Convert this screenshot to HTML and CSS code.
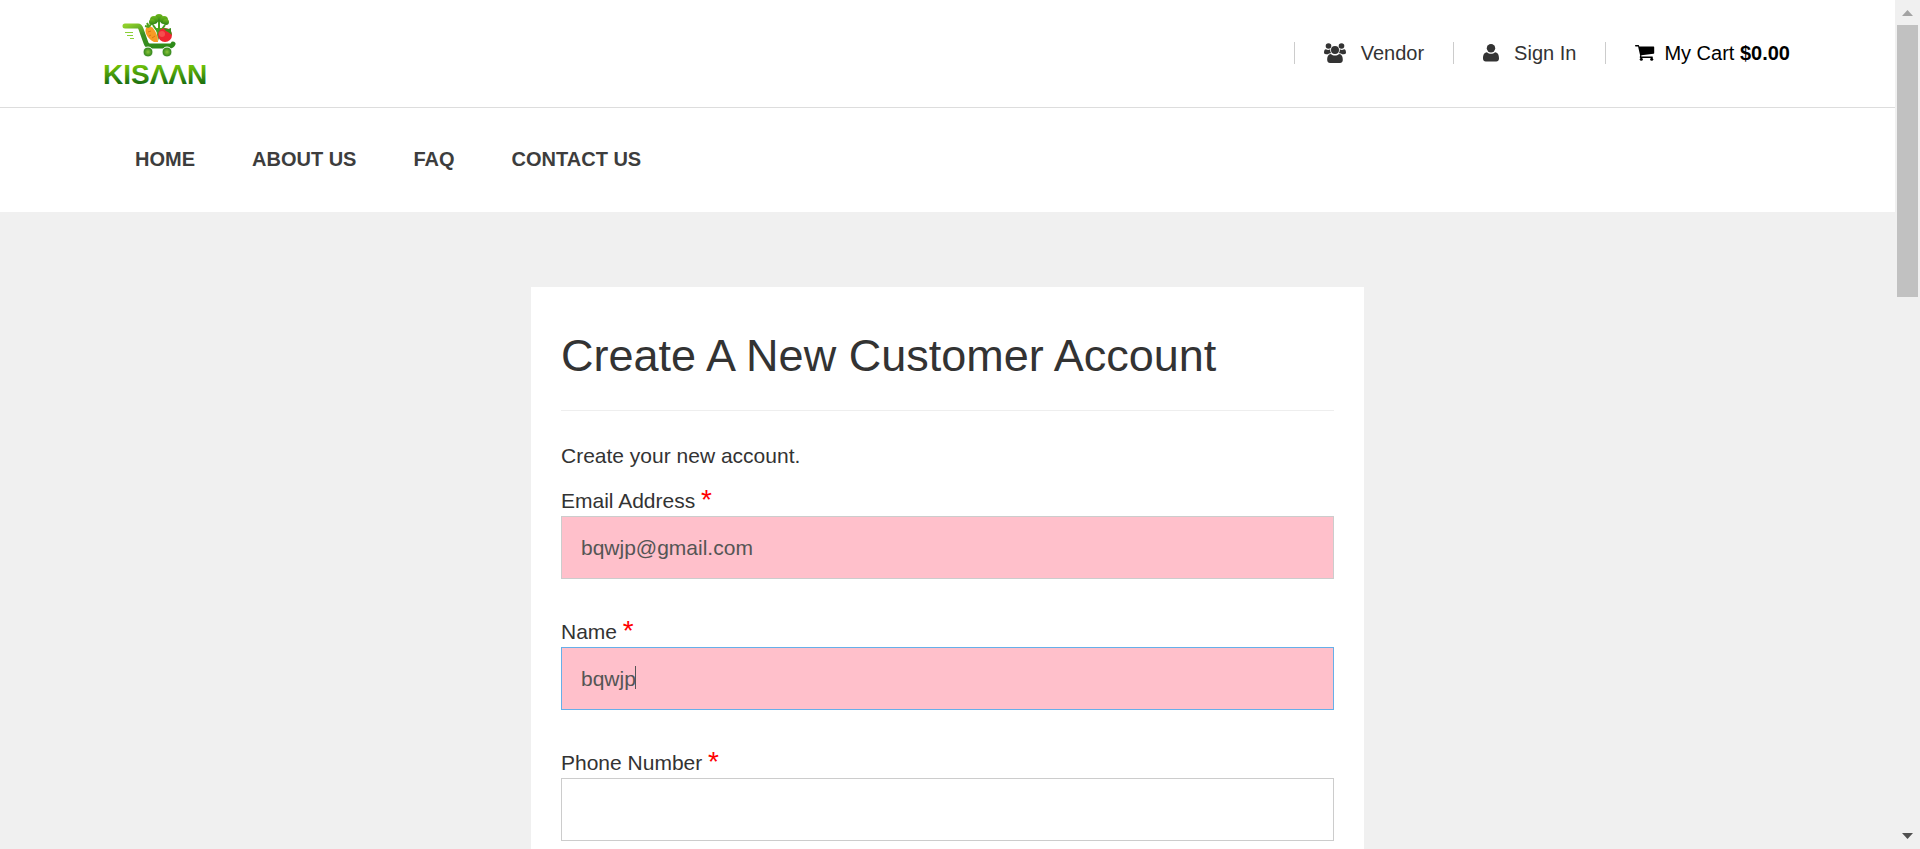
FILE: index.html
```
<!DOCTYPE html>
<html lang="en">
<head>
<meta charset="utf-8">
<title>Kisaan - Create Account</title>
<link rel="stylesheet" href="styles.css">
</head>
<body>
<div class="page">
  <header class="topbar">
    <a class="logo" href="#" aria-label="Kisaan">
      <svg width="116" height="76" viewBox="-2 0 116 76">
        <defs>
          <linearGradient id="leaf" x1="0" y1="0" x2="0" y2="1">
            <stop offset="0" stop-color="#6fb81c"/><stop offset="1" stop-color="#2a8216"/>
          </linearGradient>
          <linearGradient id="cart" x1="0" y1="0" x2="1" y2="1">
            <stop offset="0" stop-color="#8fcf2a"/><stop offset=".4" stop-color="#3a8f22"/><stop offset="1" stop-color="#2c8a18"/>
          </linearGradient>
          <linearGradient id="word" gradientUnits="userSpaceOnUse" x1="0" y1="50" x2="0" y2="70">
            <stop offset="0" stop-color="#76c806"/><stop offset="1" stop-color="#1a6e10"/>
          </linearGradient>
          <radialGradient id="wheel">
            <stop offset="0" stop-color="#8bc53a"/><stop offset="1" stop-color="#247d18"/>
          </radialGradient>
        </defs>
        <path d="M51 14 53 27 57 14Z" fill="#55a81c"/>
        <path d="M53 18 48 11M55 18 60 11M54 18V8" stroke="#46a01c" stroke-width="2"/>
        <g fill="url(#leaf)">
          <circle cx="54" cy="4" r="4"/><circle cx="49" cy="6" r="4"/><circle cx="59" cy="6" r="4"/>
          <circle cx="47" cy="8" r="3"/><circle cx="61" cy="8" r="3"/>
        </g>
        <path d="M41 14C42 12 46 12 48 14 51 18 53 22 53 28H49C43 25 39 19 41 14Z" fill="#f99a24"/>
        <path d="M43 18 46 17M47 24 50 22M44 22 46 21" stroke="#d87812"/>
        <path d="M44 13 40 12M44 13 42 9M44 13 46 10" stroke="#4ea41d" stroke-width="2"/>
        <circle cx="60" cy="21" r="7" fill="#ee2530"/>
        <circle cx="57" cy="20" r="3" fill="#fa6a61" opacity=".6"/>
        <path d="M61 17 58 14 63 15 66 14 66 17 67 21 63 18Z" fill="#398d19"/>
        <path d="M20 12H33Q35 12 36 15L41 29Q42 32 45 32H65Q67 32 68 30" fill="none" stroke="url(#cart)" stroke-width="5" stroke-linecap="round" stroke-linejoin="round"/>
        <path d="M20 18.500H28M22 21.500H28M25 24.500H29" stroke="#8bcf37"/>
        <circle cx="43" cy="38" r="5" fill="url(#wheel)" stroke="#fff"/>
        <circle cx="62" cy="38" r="5" fill="url(#wheel)" stroke="#fff"/>
        <text class="wordmark" x="-2" y="70" fill="url(#word)">KISΛΛN</text>
      </svg>
    </a>
    <ul class="tools">
      <li><a class="tool" href="#">
        <svg width="22" height="20" viewBox="0 0 22 20" fill="currentColor">
          <circle cx="4.500" cy="3" r="2.800"/><circle cx="17.500" cy="3" r="2.800"/>
          <path d="M1.900 6.200C3.500 7.200 5 7 6.200 6.300 6 8.200 6.700 9.500 7.200 10.200 5.800 10.200 4.700 10.500 4 11.200H2C.7 11.200 0 10.500 0 9.500 0 8 .5 6.200 1.900 6.200ZM20.100 6.200C18.500 7.200 17 7 15.800 6.300 16 8.200 15.300 9.500 14.800 10.200 16.200 10.200 17.300 10.500 18 11.200H20C21.300 11.200 22 10.500 22 9.500 22 8 21.500 6.200 20.100 6.200Z"/>
          <circle cx="11" cy="7" r="4"/>
          <path d="M7 11C9 13 13 13 15 11 18 11.200 18.800 14 18.800 17 18.800 19 17.500 20 16 20H6C4.500 20 3.200 19 3.200 17 3.200 14 4 11.200 7 11Z"/>
        </svg><span>Vendor</span></a></li>
      <li><a class="tool" href="#">
        <svg width="16" height="18" viewBox="0 0 16 18" fill="currentColor">
          <circle cx="8" cy="4.300" r="4.200"/>
          <path d="M4 8.300C6.300 10.300 9.700 10.300 12 8.300 15.200 8.500 16 11.500 16 14.500 16 16.500 14.800 17.500 13.300 17.500H2.700C1.200 17.500 0 16.500 0 14.500 0 11.500.8 8.500 4 8.300Z"/>
        </svg><span>Sign In</span></a></li>
      <li><a class="tool tool-cart" href="#">
        <svg width="20" height="16" viewBox="0 0 20 16" fill="currentColor">
          <path d="M.7 0H3.200C4 0 4.100.7 4.300 1.500H18.600C19 1.500 19.200 1.800 19.200 2.200V8C19.200 8.400 19 8.700 18.600 8.800L6.400 10.300 6.300 11.500H17.200C18.200 11.500 18.200 13 17.200 13H5.500C4.500 13 4.600 12 5.200 10.800L3.100 1.500H.7C-.3 1.500-.3 0 .7 0Z"/>
          <circle cx="6.300" cy="14.300" r="1.500"/><circle cx="16.700" cy="14.300" r="1.500"/>
        </svg><span>My Cart <b>$0.00</b></span></a></li>
    </ul>
  </header>
  <nav class="menu">
    <a href="#">HOME</a>
    <a href="#">ABOUT US</a>
    <a href="#">FAQ</a>
    <a href="#">CONTACT US</a>
  </nav>
  <main class="content">
    <form class="card">
      <h1>Create A New Customer Account</h1>
      <p class="intro">Create your new account.</p>
      <div class="field">
        <label for="email">Email Address <span class="required">*</span></label>
        <input class="filled" id="email" type="email" value="bqwjp@gmail.com">
      </div>
      <div class="field">
        <label for="name">Name <span class="required">*</span></label>
        <div class="control">
          <input class="filled active" id="name" type="text" value="bqwjp">
          <span class="caret"></span>
        </div>
      </div>
      <div class="field">
        <label for="phone">Phone Number <span class="required">*</span></label>
        <input id="phone" type="tel">
      </div>
    </form>
  </main>
</div>
<div class="scrollbar" aria-hidden="true">
  <svg width="11" height="6" viewBox="0 0 11 6"><path d="M0 6 5.500 0 11 6Z" fill="#a3a3a3"/></svg>
  <div class="track"><div class="thumb"></div></div>
  <svg width="11" height="6" viewBox="0 0 11 6"><path d="M0 0H11L5.500 6Z" fill="#505050"/></svg>
</div>
</body>
</html>
```
FILE: styles.css
```
* {
  box-sizing: border-box;
}

body {
  margin: 0;
  height: 100vh;
  display: grid;
  grid-template-columns: 1fr 25px;
  overflow: hidden;
  font: 21px/30px "Liberation Sans", Arial, sans-serif;
  color: #333;
  background: #f0f0f0;
}

a {
  color: inherit;
  text-decoration: none;
}

.page {
  min-width: 0;
  height: 100vh;
  overflow: hidden;
}

.topbar {
  display: flex;
  justify-content: space-between;
  align-items: flex-start;
  padding: 14px 105px 17px 103px;
  background: #fff;
  border-bottom: 1px solid #ddd;
}

.logo svg {
  display: block;
}

.wordmark {
  font: bold 28px "Liberation Sans", Arial, sans-serif;
}

.tools {
  display: flex;
  margin: 28px 0 0;
  padding: 0;
  list-style: none;
  font-size: 20px;
  line-height: 22px;
}

.tools li {
  padding: 0 29px;
  border-left: 1px solid #ccc;
}

.tools li:last-child {
  padding-right: 0;
}

.tool {
  display: flex;
  align-items: center;
  gap: 15px;
}

.tool-cart {
  gap: 9px;
  color: #000;
}

.menu {
  display: flex;
  gap: 57px;
  padding: 36px 135px 38px;
  background: #fff;
  font-size: 20px;
  font-weight: bold;
  color: #3d3d3d;
}

.content {
  padding: 75px 0;
}

.card {
  max-width: 833px;
  margin: 0 auto;
  padding: 44px 30px;
  background: #fff;
}

h1 {
  margin: 0 0 30px;
  padding-bottom: 30px;
  border-bottom: 1px solid #eee;
  font-size: 45px;
  line-height: 49px;
  font-weight: normal;
}

.intro {
  margin: 0 0 15px;
}

.field {
  margin-bottom: 38px;
}

.field label {
  display: block;
}

.required {
  color: #f00;
  font-size: 28px;
  line-height: 0;
  vertical-align: -1px;
}

.control {
  position: relative;
}

input {
  display: block;
  width: 100%;
  height: 63px;
  padding: 0 19px;
  border: 1px solid #ccc;
  border-radius: 0;
  background: #fff;
  color: #555;
  font: inherit;
}

.filled {
  background: #ffc0cb;
}

.active {
  border-color: #66afe9;
}

.caret {
  position: absolute;
  left: 74px;
  top: 19px;
  width: 1px;
  height: 23px;
  background: #555;
}

.scrollbar {
  display: flex;
  flex-direction: column;
  align-items: center;
  padding: 10px 2px;
  background: #f0f0f0;
}

.track {
  flex: 1;
  width: 21px;
  margin: 9px 0;
}

.thumb {
  height: 34%;
  background: #c1c1c1;
}
```
